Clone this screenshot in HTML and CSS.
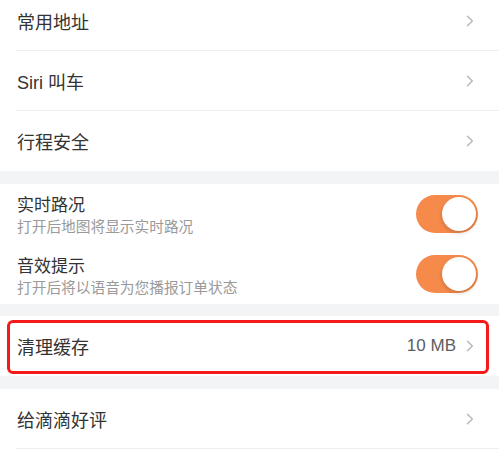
FILE: index.html
```html
<!DOCTYPE html>
<html lang="zh-CN">
<head>
<meta charset="utf-8">
<link rel="stylesheet" href="styles.css">
</head>
<body>
<div class="page">
  <div class="group first">
    <div class="row"><span class="label">常用地址</span><span class="chev"><svg width="8" height="12" viewBox="0 0 8 12"><path d="M1.5 1.2 L6.3 6 L1.5 10.8" fill="none" stroke="#b8b8b8" stroke-width="1.5" stroke-linecap="round" stroke-linejoin="round"/></svg></span></div>
    <div class="row"><span class="label">Siri 叫车</span><span class="chev"><svg width="8" height="12" viewBox="0 0 8 12"><path d="M1.5 1.2 L6.3 6 L1.5 10.8" fill="none" stroke="#b8b8b8" stroke-width="1.5" stroke-linecap="round" stroke-linejoin="round"/></svg></span></div>
    <div class="row last"><span class="label">行程安全</span><span class="chev"><svg width="8" height="12" viewBox="0 0 8 12"><path d="M1.5 1.2 L6.3 6 L1.5 10.8" fill="none" stroke="#b8b8b8" stroke-width="1.5" stroke-linecap="round" stroke-linejoin="round"/></svg></span></div>
  </div>
  <div class="gap g13"></div>
  <div class="group">
    <div class="trow">
      <div class="texts">
        <div class="ttitle">实时路况</div>
        <div class="tsub">打开后地图将显示实时路况</div>
      </div>
      <div class="switch"><div class="knob"></div></div>
    </div>
    <div class="trow">
      <div class="texts second">
        <div class="ttitle">音效提示</div>
        <div class="tsub">打开后将以语音为您播报订单状态</div>
      </div>
      <div class="switch"><div class="knob"></div></div>
    </div>
  </div>
  <div class="gap g12"></div>
  <div class="group">
    <div class="row last"><span class="label">清理缓存</span><span class="value">10 MB</span><span class="chev"><svg width="8" height="12" viewBox="0 0 8 12"><path d="M1.5 1.2 L6.3 6 L1.5 10.8" fill="none" stroke="#b8b8b8" stroke-width="1.5" stroke-linecap="round" stroke-linejoin="round"/></svg></span><div class="redbox"></div></div>
  </div>
  <div class="gap g13"></div>
  <div class="group">
    <div class="row"><span class="label">给滴滴好评</span><span class="chev"><svg width="8" height="12" viewBox="0 0 8 12"><path d="M1.5 1.2 L6.3 6 L1.5 10.8" fill="none" stroke="#b8b8b8" stroke-width="1.5" stroke-linecap="round" stroke-linejoin="round"/></svg></span></div>
  </div>
</div>
</body>
</html>
```

FILE: styles.css
```css
html, body {
  margin: 0;
  padding: 0;
  background: #ffffff;
}
body {
  font-family: "Liberation Sans", "Noto Sans CJK SC", sans-serif;
  color: #333333;
  overflow: hidden;
}
.page {
  width: 499px;
  height: 450px;
  overflow: hidden;
}
.group {
  background: #ffffff;
}
.group.first {
  margin-top: -9px;
}
.gap {
  background: #f3f4f6;
}
.g13 { height: 13px; }
.g12 { height: 12px; }
.row {
  position: relative;
  height: 59px;
  display: flex;
  align-items: center;
  margin-left: 16px;
  padding-right: 25px;
  border-bottom: 1px solid #efefef;
}
.row.last {
  border-bottom: none;
  height: 60px;
}
.label {
  flex: 1;
  font-size: 18px;
  color: #333333;
  padding-left: 1px;
}
.value {
  font-size: 17px;
  color: #5e5e5e;
  margin-right: 10px;
}
.chev {
  display: flex;
  align-items: center;
  width: 8px;
  height: 12px;
}
.chev svg { display: block; }
.redbox {
  position: absolute;
  left: -9px;
  right: 10px;
  top: 4px;
  bottom: 2px;
  border: 3px solid #f41a1a;
  border-radius: 6px;
}
.trow {
  height: 60px;
  display: flex;
  align-items: center;
  padding-left: 17px;
  padding-right: 21px;
}
.texts {
  flex: 1;
  display: flex;
  flex-direction: column;
  margin-top: 4px;
}
.texts.second {
  margin-top: 6px;
}
.ttitle {
  font-size: 17px;
  line-height: 22px;
  color: #333333;
}
.tsub {
  font-size: 14.7px;
  line-height: 20px;
  color: #9a9a9a;
}
.switch {
  position: relative;
  width: 62px;
  height: 38px;
  border-radius: 19px;
  background: #f58a4b;
}
.knob {
  position: absolute;
  right: 2px;
  top: 2px;
  width: 34px;
  height: 34px;
  border-radius: 50%;
  background: #ffffff;
  box-shadow: 0 2px 4px rgba(0,0,0,0.18);
}
```
